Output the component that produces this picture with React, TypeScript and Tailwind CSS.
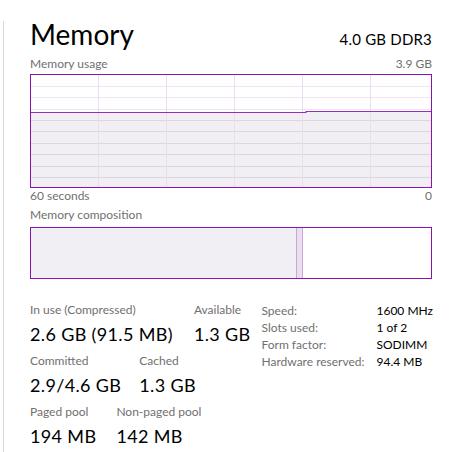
import React from "react";

const FONT = { fontFamily: "Lato, 'Open Sans', sans-serif" };

function UsageGraph() {
  const vx = [67, 135, 203, 271, 339];
  const hy = [11, 22, 34, 45, 56, 68, 79, 91, 102];
  return (
    <div className="w-[402px] h-[114px] border border-[#8b12ae] bg-white">
      <svg width="400" height="112" viewBox="0 0 400 112" className="block">
        <path d="M0 37 H275 V36 H400 V112 H0 Z" fill="#f2eff4" />
        {hy.map((y) => (
          <line key={y} x1="0" x2="400" y1={y + 0.5} y2={y + 0.5} stroke={y > 36 ? "#ddd6e1" : "#efe4f3"} strokeWidth="1" />
        ))}
        {vx.map((x) => (
          <line key={x} x1={x + 0.5} x2={x + 0.5} y1="0" y2="112" stroke="#ecdcf1" strokeWidth="1" />
        ))}
        <path d="M0 37.5 H275 V36.5 H400" fill="none" stroke="#9a2cbd" strokeWidth="1.2" />
      </svg>
    </div>
  );
}

function Stat({ label, value }: { label: string; value: string }) {
  return (
    <div className="flex flex-col">
      <div className="text-[12px] leading-[16px] text-[#707070]">{label}</div>
      <div className="mt-[4px] text-[18px] leading-[24px] tracking-[0.35px] text-black whitespace-nowrap">{value}</div>
    </div>
  );
}

export default function App() {
  const info: [string, string][] = [
    ["Speed:", "1600 MHz"],
    ["Slots used:", "1 of 2"],
    ["Form factor:", "SODIMM"],
    ["Hardware reserved:", "94.4 MB"],
  ];
  return (
    <div className="w-[453px] h-[452px] bg-white overflow-hidden flex" style={FONT}>
      <div className="ml-[3px] mt-[21px] border-l border-[#d9d9d9] pl-[26px] w-[430px] h-[431px]">
        <div className="-mt-px flex items-baseline justify-between w-[402px]">
          <div className="text-[28px] leading-[28px] text-black">Memory</div>
          <div className="text-[15px] leading-[20px] text-black tracking-[0.2px]">4.0 GB DDR3</div>
        </div>
        <div className="mt-[7px] flex justify-between w-[402px] text-[12px] leading-[16px] text-[#707070]">
          <span>Memory usage</span>
          <span>3.9 GB</span>
        </div>
        <div className="mt-[2px]">
          <UsageGraph />
        </div>
        <div className="flex justify-between w-[402px] text-[12px] leading-[16px] text-[#707070]">
          <span>60 seconds</span>
          <span>0</span>
        </div>
        <div className="mt-[3px] text-[12px] leading-[16px] text-[#707070]">Memory composition</div>
        <div className="mt-[4px] w-[402px] h-[52px] border border-[#8b12ae] flex">
          <div className="w-[265px] bg-[#f2eff4]" />
          <div className="w-[7px] border-x border-[#c9a6d6] bg-[#ebdef0]" />
          <div className="flex-1 bg-white" />
        </div>
        <div className="mt-[23px] flex items-start">
          <div className="w-[233px] flex flex-col gap-[7px]">
            <div className="flex gap-[21px]">
              <Stat label="In use (Compressed)" value="2.6 GB (91.5 MB)" />
              <Stat label="Available" value="1.3 GB" />
            </div>
            <div className="flex gap-[18px]">
              <Stat label="Committed" value="2.9/4.6 GB" />
              <Stat label="Cached" value="1.3 GB" />
            </div>
            <div className="flex gap-[20px]">
              <Stat label="Paged pool" value="194 MB" />
              <Stat label="Non-paged pool" value="142 MB" />
            </div>
          </div>
          <div className="grid grid-cols-[115px_auto] content-start text-[12px] leading-[17px]">
            {info.map(([k, v]) => (
              <React.Fragment key={k}>
                <div className="text-[#707070] whitespace-nowrap">{k}</div>
                <div className="text-black whitespace-nowrap">{v}</div>
              </React.Fragment>
            ))}
          </div>
        </div>
      </div>
    </div>
  );
}
